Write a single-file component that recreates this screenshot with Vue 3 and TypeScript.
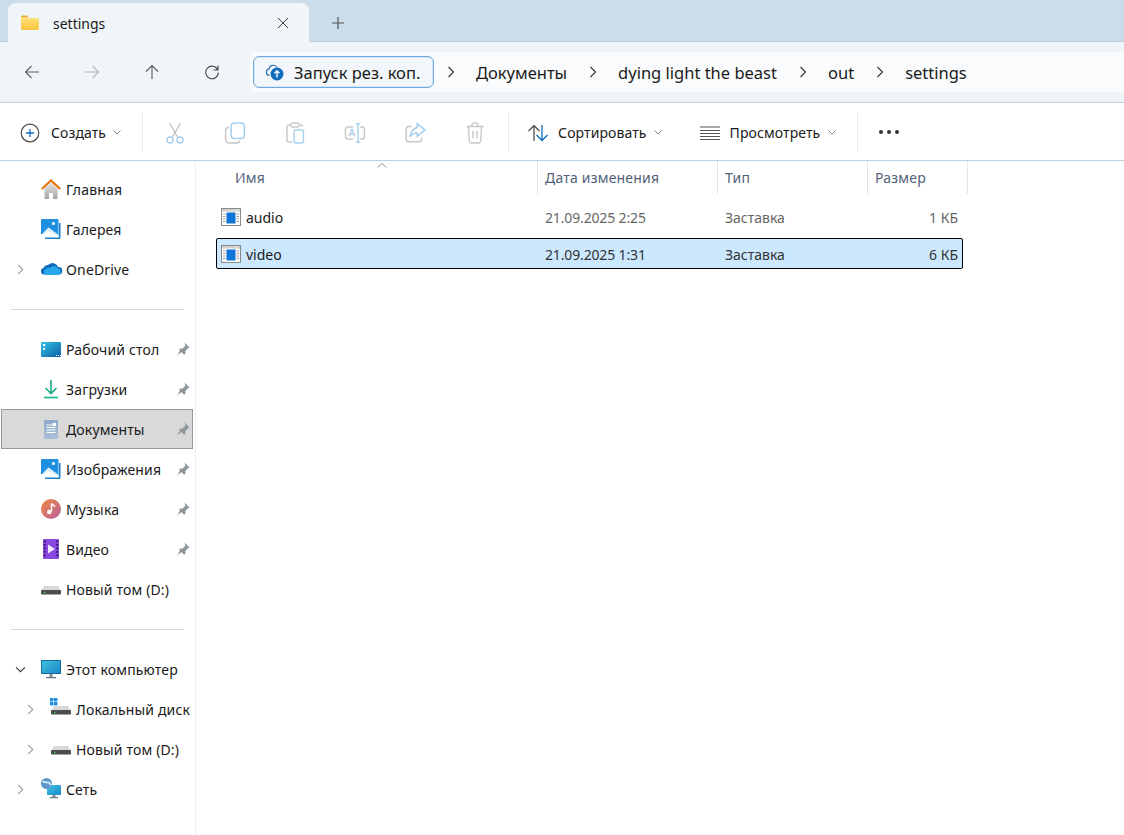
<script setup lang="ts">
interface NavRow {
  label?: string
  icon?: string
  level?: number
  chevron?: 'right' | 'down'
  pin?: boolean
  selected?: boolean
  divider?: boolean
}

const navRows: NavRow[] = [
  { label: 'Главная', icon: 'home' },
  { label: 'Галерея', icon: 'gallery' },
  { label: 'OneDrive', icon: 'onedrive', chevron: 'right' },
  { divider: true },
  { label: 'Рабочий стол', icon: 'desktop', pin: true },
  { label: 'Загрузки', icon: 'downloads', pin: true },
  { label: 'Документы', icon: 'documents', pin: true, selected: true },
  { label: 'Изображения', icon: 'gallery', pin: true },
  { label: 'Музыка', icon: 'music', pin: true },
  { label: 'Видео', icon: 'video', pin: true },
  { label: 'Новый том (D:)', icon: 'drive' },
  { divider: true },
  { label: 'Этот компьютер', icon: 'pc', chevron: 'down' },
  { label: 'Локальный диск', icon: 'sysdrive', chevron: 'right', level: 1 },
  { label: 'Новый том (D:)', icon: 'drive', chevron: 'right', level: 1 },
  { label: 'Сеть', icon: 'network', chevron: 'right' },
]

const crumbs = ['Документы', 'dying light the beast', 'out', 'settings']

const files = [
  { name: 'audio', date: '21.09.2025 2:25', type: 'Заставка', size: '1 КБ', selected: false },
  { name: 'video', date: '21.09.2025 1:31', type: 'Заставка', size: '6 КБ', selected: true },
]

const columns = [
  { label: 'Имя', cls: 'c-name' },
  { label: 'Дата изменения', cls: 'c-date' },
  { label: 'Тип', cls: 'c-type' },
  { label: 'Размер', cls: 'c-size' },
]
</script>

<template>
  <div class="app">
    <svg class="defs" aria-hidden="true">
      <defs>
        <linearGradient id="gHome" x1="0" y1="0" x2="0" y2="1"><stop offset="0" stop-color="#e6e6e6" /><stop offset="1" stop-color="#a5a5a5" /></linearGradient>
        <linearGradient id="gBlue" x1="0" y1="0" x2="1" y2="1"><stop offset="0" stop-color="#2ec5e4" /><stop offset="1" stop-color="#0f5fa8" /></linearGradient>
        <linearGradient id="gDoc" x1="0" y1="0" x2="0" y2="1"><stop offset="0" stop-color="#8fa9c9" /><stop offset="1" stop-color="#a9c0d8" /></linearGradient>
        <linearGradient id="gMusic" x1="0" y1="0" x2="1" y2="1"><stop offset="0" stop-color="#f0883e" /><stop offset="1" stop-color="#b85fa0" /></linearGradient>
        <linearGradient id="gFolder" x1="0" y1="0" x2="0" y2="1"><stop offset="0" stop-color="#ffe27a" /><stop offset="1" stop-color="#f8c33c" /></linearGradient>
        <linearGradient id="gPc" x1="0" y1="0" x2="1" y2="1"><stop offset="0" stop-color="#3fc5de" /><stop offset="1" stop-color="#1a86c8" /></linearGradient>
      </defs>
    </svg>

    <div class="tabstrip">
      <div class="tab">
        <svg class="tab-folder" viewBox="0 0 18 15">
          <path d="M0 2a1.500 1.500 0 0 1 1.500-1.500h4.300l2 2H0z" fill="#f0ab25" />
          <path d="M0 3h16.500a1.500 1.500 0 0 1 1.500 1.500v9a1.500 1.500 0 0 1-1.500 1.500h-15A1.500 1.500 0 0 1 0 13.500z" fill="url(#gFolder)" />
        </svg>
        <span class="tab-title">settings</span>
        <svg class="tab-close" viewBox="0 0 12 12"><path d="M1 1l10 10M11 1L1 11" stroke="#3a3a3a" stroke-width="1" fill="none" /></svg>
      </div>
      <svg class="tab-add" viewBox="0 0 14 14"><path d="M7 1v12M1 7h12" stroke="#555" stroke-width="1.200" fill="none" /></svg>
    </div>

    <div class="navbar">
      <div class="nav-btn"><svg viewBox="0 0 16 16"><path d="M15 8H1.500M7.500 2L1.500 8l6 6" stroke="#5c5c5c" stroke-width="1.100" fill="none" /></svg></div>
      <div class="nav-btn"><svg viewBox="0 0 16 16"><path d="M1 8h13.500M8.500 2l6 6-6 6" stroke="#b4b8bb" stroke-width="1.100" fill="none" /></svg></div>
      <div class="nav-btn"><svg viewBox="0 0 16 16"><path d="M8 15V1.500M2 7.500l6-6 6 6" stroke="#5c5c5c" stroke-width="1.100" fill="none" /></svg></div>
      <div class="nav-btn"><svg viewBox="0 0 16 16"><path d="M13.800 6A6.300 6.300 0 1 0 14.300 8.500M14 1.500V6h-4.500" stroke="#4a4a4a" stroke-width="1.100" fill="none" /></svg></div>
      <div class="address">
        <div class="chip">
          <svg class="chip-icon" viewBox="0 0 20 18">
            <path d="M4.500 12.500A3.400 3.400 0 0 1 4 5.800 4.300 4.300 0 0 1 12 4.500" stroke="#2a6fb5" stroke-width="1.200" fill="none" />
            <circle cx="12" cy="11" r="6.500" fill="#0f6cbd" />
            <path d="M12 14.500V8M9.500 10.200L12 7.700l2.500 2.500" stroke="#fff" stroke-width="1.400" fill="none" />
          </svg>
          <span>Запуск рез. коп.</span>
        </div>
        <template v-for="c in crumbs" :key="c">
          <svg class="crumb-sep" viewBox="0 0 8 12"><path d="M1.500 1l5 5-5 5" stroke="#333" stroke-width="1.100" fill="none" /></svg>
          <span class="crumb">{{ c }}</span>
        </template>
      </div>
    </div>

    <div class="cmdbar">
      <div class="cmd cmd-new">
        <svg class="cmd-ic" viewBox="0 0 20 20">
          <circle cx="10" cy="10" r="8.800" stroke="#4a4a4a" stroke-width="1.200" fill="none" />
          <path d="M10 6v8M6 10h8" stroke="#0f6cbd" stroke-width="1.300" fill="none" />
        </svg>
        <span>Создать</span>
        <svg class="cmd-chev" viewBox="0 0 8 5"><path d="M.5.500L4 4 7.500.5" stroke="#777" stroke-width=".9" fill="none" /></svg>
      </div>
      <div class="sep sep-1"></div>
      <div class="icon-btn">
        <svg viewBox="0 0 20 22">
          <path d="M4.500 1l8 14M15.500 1l-8 14" stroke="#bdbdbd" stroke-width="1.200" fill="none" />
          <circle cx="5" cy="18" r="3" stroke="#a7d0ee" stroke-width="1.400" fill="none" />
          <circle cx="15" cy="18" r="3" stroke="#a7d0ee" stroke-width="1.400" fill="none" />
        </svg>
      </div>
      <div class="icon-btn">
        <svg viewBox="0 0 20 20">
          <rect x="6.500" y="1" width="12" height="14" rx="3" stroke="#a7d0ee" stroke-width="1.400" fill="none" />
          <path d="M4.500 5A2.800 2.800 0 0 0 1.500 7.500v8A3.200 3.200 0 0 0 4.700 19h7a2.800 2.800 0 0 0 2.700-2" stroke="#c8c8c8" stroke-width="1.400" fill="none" />
        </svg>
      </div>
      <div class="icon-btn">
        <svg viewBox="0 0 20 22">
          <path d="M5.500 3H4a2 2 0 0 0-2 2v13a2 2 0 0 0 2 2h3M14.500 3H16a2 2 0 0 1 1.800 1.500" stroke="#c8c8c8" stroke-width="1.400" fill="none" />
          <rect x="6" y="1" width="8" height="4" rx="1.200" stroke="#c8c8c8" stroke-width="1.300" fill="none" />
          <rect x="9" y="8" width="9.500" height="13" rx="2" stroke="#a7d0ee" stroke-width="1.400" fill="none" />
        </svg>
      </div>
      <div class="icon-btn">
        <svg viewBox="0 0 22 20">
          <path d="M9 4H4a2.500 2.500 0 0 0-2.500 2.500v7A2.500 2.500 0 0 0 4 16h5M16 4h2a2.500 2.500 0 0 1 2.500 2.500v7A2.500 2.500 0 0 1 18 16h-2" stroke="#c8c8c8" stroke-width="1.400" fill="none" />
          <path d="M5 13.500l3-7.500 3 7.500M6 11.200h4" stroke="#a7c8e6" stroke-width="1.200" fill="none" />
          <path d="M14 1v18M12 .8h4M12 19.200h4" stroke="#a7d0ee" stroke-width="1.400" fill="none" />
        </svg>
      </div>
      <div class="icon-btn">
        <svg viewBox="0 0 20 20">
          <path d="M7 4H4.500A2.500 2.500 0 0 0 2 6.500v9A2.500 2.500 0 0 0 4.500 18h9a2.500 2.500 0 0 0 2.500-2.500V14" stroke="#c8c8c8" stroke-width="1.400" fill="none" />
          <path d="M12 1.500l7 5.700L12 13v-3C9 10 7 11 5.500 13.500 6 9.500 8.500 5.500 12 5z" stroke="#a7d0ee" stroke-width="1.400" fill="none" />
        </svg>
      </div>
      <div class="icon-btn">
        <svg viewBox="0 0 20 22">
          <path d="M1.500 4.500h17M7 4.500V3a2 2 0 0 1 2-2h2a2 2 0 0 1 2 2v1.500M3.500 4.500l.8 14a2.500 2.500 0 0 0 2.500 2.500h6.400a2.500 2.500 0 0 0 2.500-2.500l.8-14M8 9v7.500M12 9v7.500" stroke="#c8c8c8" stroke-width="1.400" fill="none" />
        </svg>
      </div>
      <div class="sep sep-2"></div>
      <div class="cmd cmd-sort">
        <svg class="cmd-ic" viewBox="0 0 22 18">
          <path d="M7 17V1.500M1.500 7L7 1.500 12.500 7" stroke="#444" stroke-width="1.200" fill="none" />
          <path d="M15 1v15.500M9.500 11l5.500 5.500L20.500 11" stroke="#0f6cbd" stroke-width="1.300" fill="none" />
        </svg>
        <span>Сортировать</span>
        <svg class="cmd-chev" viewBox="0 0 8 5"><path d="M.5.500L4 4 7.500.5" stroke="#777" stroke-width=".9" fill="none" /></svg>
      </div>
      <div class="cmd cmd-view">
        <svg class="cmd-ic" viewBox="0 0 20 14">
          <path d="M0 1h20M0 4.500h20M0 7.500h20M0 10.500h20M0 13.500h20" stroke="#555" stroke-width="1" fill="none" />
        </svg>
        <span>Просмотреть</span>
        <svg class="cmd-chev" viewBox="0 0 8 5"><path d="M.5.500L4 4 7.500.5" stroke="#777" stroke-width=".9" fill="none" /></svg>
      </div>
      <div class="sep sep-3"></div>
      <div class="dots"><i></i><i></i><i></i></div>
    </div>

    <div class="main">
      <aside class="sidebar">
        <template v-for="(r, i) in navRows" :key="i">
          <div v-if="r.divider" class="nav-divider"><span></span></div>
          <div v-else class="nav-row" :class="{ selected: r.selected, nested: r.level === 1 }">
            <span class="chev-slot">
              <svg v-if="r.chevron === 'right'" class="chev" viewBox="0 0 8 12"><path d="M1.500 1l5 5-5 5" stroke="#8a8a8a" stroke-width="1.200" fill="none" /></svg>
              <svg v-else-if="r.chevron === 'down'" class="chev-down" viewBox="0 0 12 8"><path d="M1 1.500l5 5 5-5" stroke="#3a3a3a" stroke-width="1.300" fill="none" /></svg>
            </span>
            <svg class="nav-ic" viewBox="0 0 20 20">
              <template v-if="r.icon === 'home'">
                <path d="M3.500 9.500L10 3.500l6.500 6V20H12v-6H8v6H3.500z" fill="url(#gHome)" />
                <path d="M.8 10L10 1.500 19.200 10" stroke="#e8720c" stroke-width="2.200" fill="none" />
              </template>
              <template v-else-if="r.icon === 'gallery'">
                <path d="M18 4h1.500v15a1 1 0 0 1-1 1H4v-1.500h14z" fill="#1b7fcf" />
                <rect x="0" y="0" width="17.500" height="18" rx="1" fill="#1f8fe0" />
                <circle cx="12.500" cy="4.500" r="1.500" fill="#fff" />
                <path d="M0 16l7.500-7.500L15 14l2.500 2v1a1 1 0 0 1-1 1H1a1 1 0 0 1-1-1z" fill="#dff0fb" />
                <path d="M0 16l7.500-3.500L17.500 17v.2a.8.800 0 0 1-.8.800H.8a.8.800 0 0 1-.8-.8z" fill="#fff" />
              </template>
              <template v-else-if="r.icon === 'onedrive'">
                <path d="M3 15.500A3.300 3.300 0 0 1 2.500 9 5 5 0 0 1 7 6a6 6 0 0 1 10 2 3.500 3.500 0 0 1 1 7.500z" fill="#0f6cbd" />
                <path d="M5.500 16a3 3 0 0 1-.5-5.900C6 8.500 8 8 9.500 9c1.500-2 5-2.500 7 .2a3.500 3.500 0 0 1 .8 6.800z" fill="#28a8ea" />
              </template>
              <template v-else-if="r.icon === 'desktop'">
                <rect x="0" y="3" width="20" height="15" rx="1" fill="url(#gBlue)" />
                <rect x="2" y="5" width="2.200" height="2.200" fill="#fff" />
                <rect x="2" y="9" width="2.200" height="2" fill="#d8f4fb" />
                <path d="M15 16.500h1M17 16.500h1M19 16.500h1" stroke="#fff" stroke-width="1" />
              </template>
              <template v-else-if="r.icon === 'downloads'">
                <path d="M10 1v13M4.500 9l5.500 5.500L15.500 9" stroke="#1aa884" stroke-width="1.600" fill="none" />
                <path d="M3 18.500h14" stroke="#1db596" stroke-width="1.700" />
              </template>
              <template v-else-if="r.icon === 'documents'">
                <rect x="3" y="1" width="14" height="19" rx="1.200" fill="url(#gDoc)" />
                <path d="M5.500 6H11M5.500 8.500h9M5.500 11h9M5.500 13.500h9" stroke="#fff" stroke-width="1" />
                <rect x="11.500" y="4" width="3.500" height="3" fill="#fff" />
              </template>
              <template v-else-if="r.icon === 'music'">
                <circle cx="10" cy="10" r="10" fill="url(#gMusic)" />
                <path d="M10.500 4.500v8" stroke="#fff" stroke-width="1.500" />
                <path d="M10.500 4.500c1 1.500 3 1.500 3.500 3.500" stroke="#fff" stroke-width="1.300" fill="none" />
                <circle cx="8.300" cy="13" r="2.300" fill="#fff" />
              </template>
              <template v-else-if="r.icon === 'video'">
                <rect x="2" y="0" width="16" height="20" rx="1" fill="#8a48e0" />
                <rect x="2.800" y="1.500" width="1.800" height="1.800" fill="#2e1360" />
                <rect x="2.800" y="5" width="1.800" height="1.800" fill="#2e1360" />
                <rect x="2.800" y="8.500" width="1.800" height="1.800" fill="#2e1360" />
                <rect x="2.800" y="12" width="1.800" height="1.800" fill="#2e1360" />
                <rect x="2.800" y="15.500" width="1.800" height="1.800" fill="#2e1360" />
                <rect x="15.400" y="1.500" width="1.800" height="1.800" fill="#2e1360" />
                <rect x="15.400" y="5" width="1.800" height="1.800" fill="#2e1360" />
                <rect x="15.400" y="8.500" width="1.800" height="1.800" fill="#2e1360" />
                <rect x="15.400" y="12" width="1.800" height="1.800" fill="#2e1360" />
                <rect x="15.400" y="15.500" width="1.800" height="1.800" fill="#2e1360" />
                <path d="M7 5.500L14 10l-7 4.500z" fill="#f0e8ff" />
              </template>
              <template v-else-if="r.icon === 'drive'">
                <path d="M3 7h14l2.500 4.500H.5z" fill="#d9d9d9" />
                <rect x="0" y="11" width="20" height="4.500" rx=".8" fill="#4d4d4d" />
                <rect x="3" y="12.800" width="1.400" height="1.200" fill="#3ddc4a" />
              </template>
              <template v-else-if="r.icon === 'sysdrive'">
                <path d="M3 7h14l2.500 4.500H.5z" fill="#d9d9d9" />
                <rect x="0" y="11" width="20" height="4.500" rx=".8" fill="#4d4d4d" />
                <rect x="3" y="12.800" width="1.400" height="1.200" fill="#3ddc4a" />
                <rect x="-1" y="-1" width="3.400" height="3.400" fill="#1e90e0" />
                <rect x="3" y="-1" width="3.400" height="3.400" fill="#1e90e0" />
                <rect x="-1" y="3" width="3.400" height="3.400" fill="#1e90e0" />
                <rect x="3" y="3" width="3.400" height="3.400" fill="#1e90e0" />
              </template>
              <template v-else-if="r.icon === 'pc'">
                <rect x="0" y="1" width="20" height="14" rx="1" fill="url(#gPc)" />
                <rect x="0.500" y="1.500" width="19" height="13" fill="none" stroke="#12608f" stroke-width=".8" />
                <rect x="8.500" y="15" width="3" height="3" fill="#7f8b95" />
                <rect x="5" y="18" width="10" height="1.300" fill="#6b7780" />
              </template>
              <template v-else-if="r.icon === 'network'">
                <rect x="6" y="6" width="14" height="10" rx=".8" fill="url(#gPc)" />
                <rect x="11.500" y="16" width="3" height="2" fill="#7f8b95" />
                <rect x="9" y="18" width="8" height="1.200" fill="#6b7780" />
                <circle cx="5.500" cy="4.500" r="5.500" fill="#5f97cc" />
                <path d="M1.500 3c2-1 3 1 5 .5s2.500 1.500 3.500 2.500" stroke="#dcecf8" stroke-width="1.800" fill="none" />
              </template>
            </svg>
            <span class="nav-label">{{ r.label }}</span>
            <svg v-if="r.pin" class="pin" viewBox="0 0 14 14">
              <path d="M8.500.5l5 5-1.500.8-2.700 3 .2 2.200-1.300 1.300-5-5L4 6.500l2.200.2 3-2.700zM4 8.500L5.500 10 1 13.500z" fill="#8f979c" />
            </svg>
          </div>
        </template>
      </aside>

      <section class="content">
        <div class="col-head">
          <div v-for="c in columns" :key="c.label" class="col" :class="c.cls">{{ c.label }}</div>
          <svg class="sort-caret" viewBox="0 0 10 5"><path d="M.5 4.500L5 .5l4.500 4" stroke="#8a8a8a" stroke-width=".9" fill="none" /></svg>
        </div>
        <div class="rows">
          <div v-for="f in files" :key="f.name" class="file-row" :class="{ selected: f.selected }">
            <div class="f-name">
              <svg class="file-ic" viewBox="0 0 20 18">
                <rect x=".5" y=".5" width="19" height="17" fill="#fff" stroke="#8a8a8a" />
                <rect x="1" y="1" width="18" height="2.500" fill="#cfcfcf" />
                <path d="M14 2h1M16 2h1" stroke="#fff" stroke-width="1" />
                <rect x="5.500" y="4.500" width="9" height="11" fill="#0f74d8" />
                <path d="M2 6h2.500M2 8.500h2.500M2 11h2.500M2 13.500h2.500M15.500 6H18M15.500 8.500H18M15.500 11H18M15.500 13.500H18" stroke="#9a9a9a" stroke-width="1" />
              </svg>
              <span class="f-text">{{ f.name }}</span>
            </div>
            <div class="f-date f-text">{{ f.date }}</div>
            <div class="f-type f-text">{{ f.type }}</div>
            <div class="f-size f-text">{{ f.size }}</div>
          </div>
        </div>
      </section>
    </div>
  </div>
</template>

<style scoped>
.app {
  width: 100vw;
  height: 100vh;
  display: flex;
  flex-direction: column;
  overflow: hidden;
  background: #fff;
  font-family: "Noto Sans", "Open Sans", sans-serif;
  font-size: 14px;
  color: #1a1a1a;
}
.defs { position: absolute; width: 0; height: 0; }

.tabstrip {
  height: 41px;
  flex: none;
  display: flex;
  align-items: flex-end;
  padding-left: 8px;
  background: #cbdcea;
  border-bottom: 1px solid #bccfde;
  box-sizing: content-box;
}
.tab {
  width: 301px;
  height: 39px;
  margin-bottom: -1px;
  display: flex;
  align-items: center;
  background: #f0f5f9;
  border-radius: 8px 8px 0 0;
  box-sizing: border-box;
  padding: 1px 20px 0 13px;
}
.tab-folder { width: 18px; height: 15px; flex: none; margin-top: -2px; }
.tab-title { margin-left: 14px; flex: 1; }
.tab-close { width: 12px; height: 12px; flex: none; }
.tab-add { width: 14px; height: 14px; margin: 0 0 11px 22px; flex: none; }

.navbar {
  height: 60px;
  flex: none;
  display: flex;
  align-items: center;
  background: #f0f5f9;
  border-bottom: 1px solid #bccfde;
  padding-left: 2px;
}
.nav-btn { width: 60px; flex: none; display: flex; justify-content: center; }
.nav-btn svg { width: 16px; height: 16px; }
.address {
  margin-left: 8px;
  flex: 1;
  height: 40px;
  display: flex;
  align-items: center;
  background: #f9fbfd;
  border-radius: 6px 0 0 6px;
  padding-left: 3px;
  font-size: 16.5px;
  white-space: nowrap;
}
.chip {
  width: 181px;
  height: 32px;
  flex: none;
  box-sizing: border-box;
  display: flex;
  align-items: center;
  padding-left: 11px;
  border: 1px solid #6fa9dc;
  border-radius: 6px;
  background: #f3f7fb;
  box-shadow: inset 0 0 0 1px #d5e6f5;
}
.chip-icon { width: 20px; height: 18px; flex: none; margin-right: 9px; }
.crumb-sep { width: 8px; height: 12px; flex: none; margin: 0 21px 0 22px; }
.crumb-sep:first-of-type { margin-left: 13px; }
.crumb { flex: none; }

.cmdbar {
  height: 58px;
  flex: none;
  display: flex;
  align-items: center;
  background: #fff;
  border-bottom: 1px solid #bccfde;
  padding: 2px 0 0 20px;
  box-sizing: border-box;
}
.cmd { display: flex; align-items: center; flex: none; letter-spacing: 0.1px; }
.cmd-ic { flex: none; }
.cmd-chev { width: 8px; height: 5px; flex: none; }
.cmd-new .cmd-ic { width: 20px; height: 20px; margin-right: 11px; }
.cmd-new .cmd-chev { margin-left: 7px; }
.sep { width: 1px; height: 40px; background: #e8ecef; flex: none; margin-top: -2px; }
.sep-1 { margin-left: 21px; margin-right: 2px; }
.sep-2 { margin-left: 3px; }
.sep-3 { margin-left: 21px; }
.icon-btn { width: 60px; flex: none; display: flex; justify-content: center; }
.icon-btn svg { width: 22px; height: 22px; }
.cmd-sort { margin-left: 18px; }
.cmd-sort .cmd-ic { width: 22px; height: 18px; margin-right: 9px; }
.cmd-sort .cmd-chev { margin-left: 7px; }
.cmd-view { margin-left: 38px; }
.cmd-view .cmd-ic { width: 20px; height: 14px; margin-right: 10px; }
.cmd-view .cmd-chev { margin-left: 8px; }
.dots { margin-left: 21px; display: flex; gap: 4px; margin-top: -2px; }
.dots i { width: 4px; height: 4px; border-radius: 50%; background: #333; display: block; }

.main { flex: 1; display: flex; min-height: 0; }
.sidebar {
  width: 196px;
  flex: none;
  box-sizing: border-box;
  padding-top: 8px;
  border-right: 1px solid #f0f0f0;
  overflow: hidden;
}
.nav-row {
  height: 40px;
  margin: 0 2px 0 1px;
  box-sizing: border-box;
  display: flex;
  align-items: center;
  position: relative;
  padding-left: 39px;
  white-space: nowrap;
  overflow: hidden;
  border: 1px solid transparent;
}
.nav-row.nested { padding-left: 49px; }
.nav-row.selected { background: #d9d9d9; border-color: #999; }
.chev-slot {
  position: absolute;
  left: 10px;
  top: 0;
  width: 16px;
  height: 38px;
  display: flex;
  align-items: center;
  justify-content: center;
}
.nested .chev-slot { left: 20px; }
.chev { width: 7px; height: 11px; }
.chev-down { width: 11px; height: 7px; }
.nav-ic { width: 20px; height: 20px; flex: none; overflow: visible; }
.nav-label { margin-left: 5px; letter-spacing: 0.15px; }
.pin { position: absolute; right: 2px; top: 12px; width: 14px; height: 14px; }
.nested .nav-label { overflow: hidden; }
.nav-divider { height: 40px; display: flex; align-items: center; padding: 0 11px; }
.nav-divider span { display: block; width: 100%; height: 1px; background: #d9d9d9; }

.content { flex: 1; min-width: 0; padding-left: 20px; }
.col-head { height: 33px; display: flex; position: relative; color: #50617a; letter-spacing: 0.2px; }
.col {
  box-sizing: border-box;
  height: 33px;
  line-height: 33px;
  padding-left: 7px;
  border-right: 1px solid #e5e5e5;
  flex: none;
}
.c-name { width: 322px; padding-left: 19px; }
.c-date { width: 180px; }
.c-type { width: 150px; }
.c-size { width: 100px; }
.sort-caret { position: absolute; left: 161px; top: 2px; width: 10px; height: 5px; }

.rows { padding-top: 7px; display: flex; flex-direction: column; gap: 6px; }
.file-row {
  width: 747px;
  height: 31px;
  box-sizing: border-box;
  display: flex;
  align-items: center;
  border: 1px solid transparent;
  color: #666;
}
.file-row.selected { background: #cce8ff; border-color: #000; border-radius: 2px; color: #333; }
.f-text { padding-top: 1px; }
.f-name { width: 321px; display: flex; align-items: center; color: #1a1a1a; padding-left: 4px; box-sizing: border-box; flex: none; }
.file-ic { width: 20px; height: 18px; margin-right: 5px; flex: none; }
.f-date { width: 180px; flex: none; padding-left: 7px; box-sizing: border-box; letter-spacing: -0.15px; }
.f-type { width: 150px; flex: none; padding-left: 7px; box-sizing: border-box; }
.f-size { flex: 1; text-align: right; padding-right: 4px; }
</style>

<style>
html, body { margin: 0; overflow: hidden; background: #fff; }
</style>
